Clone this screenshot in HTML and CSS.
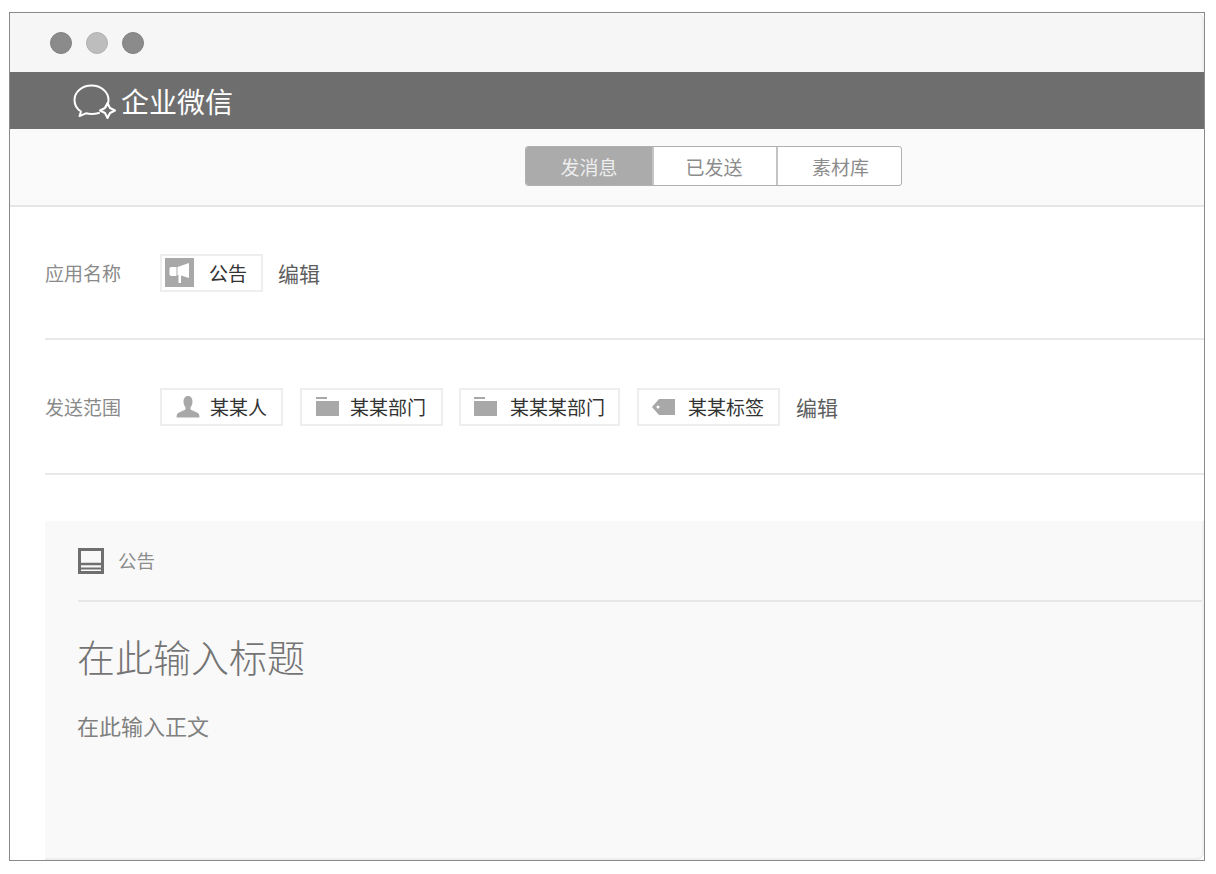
FILE: index.html
```html
<!DOCTYPE html>
<html lang="zh-CN">
<head>
<meta charset="utf-8">
<title>企业微信</title>
<link rel="stylesheet" href="styles.css">
</head>
<body>
<div class="window">
  <div class="titlebar">
    <span class="light dark"></span>
    <span class="light pale"></span>
    <span class="light dark"></span>
  </div>
  <header class="brand">
    <svg class="logo" width="44" height="37" viewBox="0 0 44 37" fill="none" stroke="#fff" stroke-width="2" stroke-linejoin="round" stroke-linecap="round">
      <path d="M32 24.500C34.500 22.500 35.500 20 35.500 17C35.500 9 28 2.500 18.500 2.500C9 2.500 1.500 9 1.500 17C1.500 22 4 26 8 28.500L6.500 33L13 30.300C16 31 21 31.200 26 30"/>
      <path d="M34.500 20L37 25L42 27.500L37 30L34.500 35L32 30L27 27.500L32 25Z"/>
    </svg>
    <span class="brand-name">企业微信</span>
  </header>
  <nav class="tabbar">
    <div class="tabs">
      <span class="tab tab-send active">发消息</span>
      <span class="tab tab-sent">已发送</span>
      <span class="tab tab-lib">素材库</span>
    </div>
  </nav>
  <main class="content">
    <section class="row row-app">
      <span class="label">应用名称</span>
      <span class="chip chip-app">
        <span class="app-icon">
          <svg width="29" height="29" viewBox="0 0 29 29" fill="#fff"><path d="M6 9H11.500V18H6C5 18 4.500 17 4.500 16V11C4.500 10 5 9 6 9Z"/><path d="M12.500 9L24 5V20L16 17.500V25H13.500V17H12.500Z"/></svg>
        </span>
        <span class="chip-text">公告</span>
      </span>
      <a class="edit">编辑</a>
    </section>
    <section class="row row-range">
      <span class="label">发送范围</span>
      <span class="chip chip-person">
        <svg width="24" height="24" viewBox="0 0 24 24" fill="#a8a8a8"><path d="M7.500 6.500C7.500 3 9.500 1 12 1C14.500 1 16.500 3 16.500 6.500C16.500 9 15.500 11 14.500 12.500V14C14.500 15 18 16 21 17.500C23 18.500 23.500 20 23.500 22.500H0.500C0.500 20 1 18.500 3 17.500C6 16 9.500 15 9.500 14V12.500C8.500 11 7.500 9 7.500 6.500Z"/></svg>
        <span class="chip-text">某某人</span>
      </span>
      <span class="chip chip-dept">
        <svg width="23" height="19" viewBox="0 0 23 19" fill="#a8a8a8"><path d="M0 0H11V2H0ZM0 4H23V19H0Z"/></svg>
        <span class="chip-text">某某部门</span>
      </span>
      <span class="chip chip-subdept">
        <svg width="23" height="19" viewBox="0 0 23 19" fill="#a8a8a8"><path d="M0 0H11V2H0ZM0 4H23V19H0Z"/></svg>
        <span class="chip-text">某某某部门</span>
      </span>
      <span class="chip chip-tag">
        <svg width="23" height="16" viewBox="0 0 23 16" fill="#a8a8a8" fill-rule="evenodd"><path d="M7 0H23V16H7L0 8ZM6 6.500A1.500 1.500 0 1 0 6 9.500A1.500 1.500 0 1 0 6 6.500Z"/></svg>
        <span class="chip-text">某某标签</span>
      </span>
      <a class="edit">编辑</a>
    </section>
    <section class="panel">
      <div class="panel-head">
        <svg width="26" height="26" viewBox="0 0 26 26" fill="none" stroke="#6f6f6f"><path d="M1.500 1.500H24.500V24.500H1.500Z" stroke-width="3"/><path d="M2 16H24" stroke-width="2.500"/><path d="M2 20.500H24" stroke-width="2"/></svg>
        <span class="panel-type">公告</span>
      </div>
      <h1 class="panel-title">在此输入标题</h1>
      <p class="panel-body">在此输入正文</p>
    </section>
  </main>
</div>
</body>
</html>
```
FILE: styles.css
```css
* { box-sizing: border-box; }
html, body { margin: 0; padding: 0; background: #fff; }
body {
  width: 1216px;
  height: 874px;
  overflow: hidden;
  padding: 12px 0 0 9px;
  font-family: "Noto Sans CJK SC", "Noto Sans", sans-serif;
}
.window {
  width: 1196px;
  height: 849px;
  border: 1px solid #8a8a8a;
  display: flex;
  flex-direction: column;
  background: #fff;
  overflow: hidden;
}
.titlebar {
  height: 59px;
  flex: none;
  background: #f6f6f6;
  border-right: 2px solid #eeeeee;
  border-top-right-radius: 7px;
  display: flex;
  align-items: center;
  gap: 14px;
  padding: 0 0 0 40px;
}
.light { width: 22px; height: 22px; border-radius: 50%; }
.light.dark { background: #8b8b8b; border: 1px solid #808080; }
.light.pale { background: #bdbdbd; border: 1px solid #b0b0b0; }
.brand {
  height: 57px;
  flex: none;
  background: #6e6e6e;
  display: flex;
  align-items: center;
  padding-left: 63px;
}
.logo { flex: none; margin-top: 1px; width: 44px; height: 37px; }
.brand-name { color: #fff; font-size: 28px; font-weight: 400; line-height: 1; margin-left: 4px; }
.tabbar {
  height: 78px;
  flex: none;
  background: #fafafa;
  border-bottom: 2px solid #e6e6e6;
  display: flex;
  padding: 17px 0 0 515px;
}
.tabs {
  display: flex;
  height: 40px;
  width: 377px;
  border: 1px solid #b0b0b0;
  border-radius: 3px;
  overflow: hidden;
  background: #fff;
}
.tab {
  display: flex;
  align-items: center;
  justify-content: center;
  font-size: 19px;
  color: #8c8c8c;
  border-left: 2px solid #c4c4c4;
}
.tab-send { width: 126px; border-left: 0; }
.tab-sent { width: 124px; padding-right: 2px; }
.tab-lib { flex: 1; padding-left: 2px; }
.tab.active { background: #ababab; color: #eee; }
.content { flex: 1; padding-left: 35px; display: flex; flex-direction: column; min-height: 0; }
.row {
  display: flex;
  align-items: center;
  border-bottom: 2px solid #e8e8e8;
  flex: none;
}
.row-app { height: 133px; }
.row-range { height: 135px; }
.label { width: 115px; flex: none; font-size: 19px; color: #8a8a8a; }
.row-range .label { margin-bottom: 1px; }
.chip {
  height: 38px;
  display: flex;
  align-items: center;
  border: 2px solid #eeeeee;
  background: #fff;
  flex: none;
}
.row-range .chip { margin-right: 17px; }
.row-range .chip-dept { margin-right: 16px; }
.chip-text { font-size: 19px; color: #333; line-height: 1; white-space: nowrap; }
.chip-app { width: 103px; padding-left: 3px; margin-right: 15px; }
.app-icon {
  width: 29px; height: 29px; background: #a8a8a8;
  display: flex; align-items: center; justify-content: center; flex: none;
}
.chip-app .chip-text { margin-left: 15px; }
.chip-person { width: 123px; padding-left: 14px; gap: 10px; }
.chip-dept { width: 143px; padding-left: 14px; gap: 11px; }
.chip-subdept { width: 161px; padding-left: 13px; gap: 13px; }
.chip-tag { width: 143px; padding-left: 13px; gap: 13px; }
.row-range .edit { margin-left: -1px; }
.edit { font-size: 21px; color: #5e5e5e; line-height: 1; margin-top: 2px; }
.panel {
  margin-top: 46px;
  flex: 1;
  background: #f9f9f9;
  border-right: 2px solid #f0f0f0;
  border-bottom: 2px solid #eeeeee;
  border-bottom-right-radius: 7px;
  padding: 0 0 0 33px;
}
.panel-head {
  height: 81px;
  border-bottom: 2px solid #e8e8e8;
  display: flex;
  align-items: center;
  gap: 15px;
}
.panel-type { font-size: 18.500px; color: #8c8c8c; line-height: 1; margin-left: -1px; }
.panel-title { margin: 25px 0 0 -1px; font-size: 38px; line-height: 58px; font-weight: 300; color: #747474; }
.panel-body { margin: 24px 0 0 -1px; font-size: 22px; line-height: 32px; color: #808080; }
```
